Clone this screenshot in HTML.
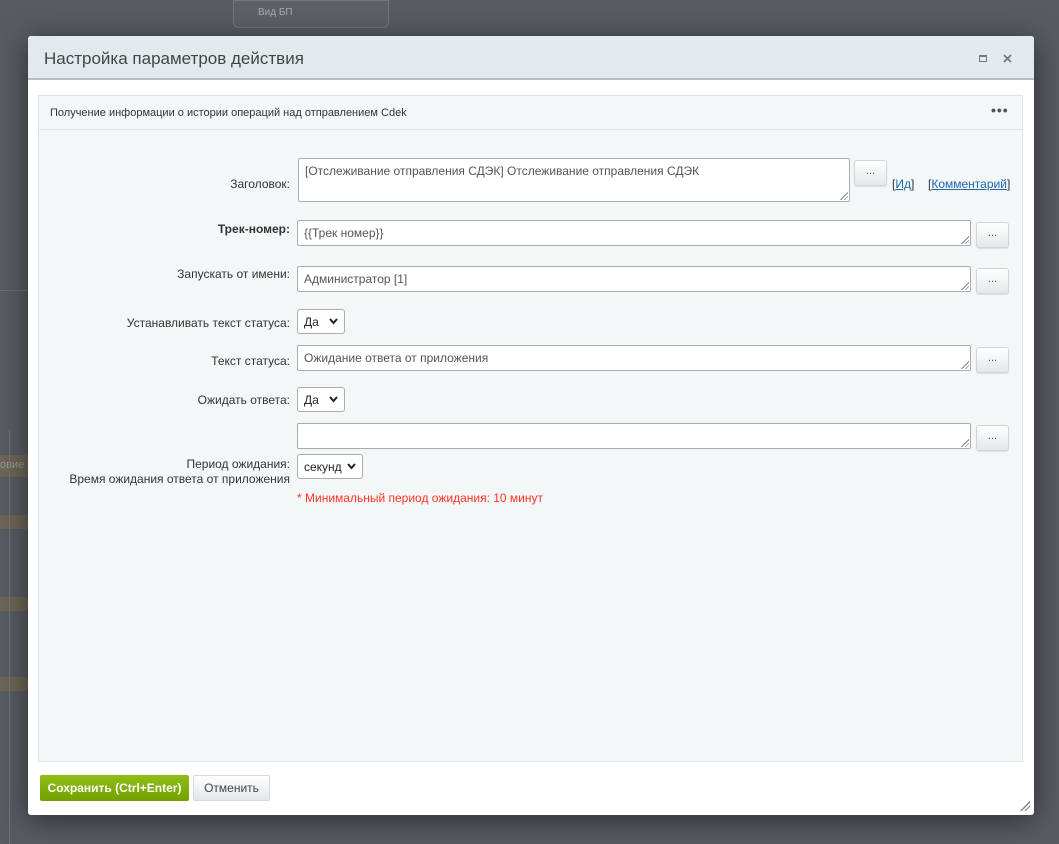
<!DOCTYPE html>
<html><head><meta charset="utf-8"><style>
*{box-sizing:border-box;margin:0;padding:0}
body{width:1059px;height:844px;overflow:hidden;background:#575c63;font-family:"Liberation Sans",sans-serif;font-size:12px;color:#333;position:relative}
.a{position:absolute}
.modal{left:28px;top:36px;width:1006px;height:779px;background:#fff;border-radius:3px;box-shadow:0 5px 30px rgba(0,0,0,.5)}
.hdr{left:0;top:0;width:1006px;height:44px;background:#e3eaed;border-bottom:2px solid #b7bcbf;border-radius:3px 3px 0 0}
.hdr span{position:absolute;left:16px;top:13px;font-size:17px;color:#444}
.panel{left:10px;top:59px;width:985px;height:667px;background:#f4f7f8;border:1px solid #dbe4e8}
.ph{left:0;top:0;width:983px;height:34px;border-bottom:1px solid #dbe4e8;background:#f4f7f8}
.lbl{text-align:right;font-size:12px;color:#333;width:300px}
.inp{background:#fff;border:1px solid #a8adb1;border-radius:2px;padding:5px 6px;font-size:12px;color:#555}
.btn{width:33px;height:26px;border:1px solid #cfd5d8;border-radius:3px;background:linear-gradient(#fff,#e3e8eb);text-align:center;font-size:11px;line-height:20px;color:#555;box-shadow:0 1px 1px rgba(0,0,0,.1)}
.sel{height:25px;border:1px solid #a8adb1;border-radius:3px;background:#fff;padding:5px 6px;font-size:12px;color:#222}
.sel svg{position:absolute;right:6px;top:8px}
.rs{position:absolute;right:1px;bottom:1px;width:8px;height:8px;background:linear-gradient(135deg,transparent 50%,#888 50%,#888 58%,transparent 58%,transparent 72%,#888 72%,#888 80%,transparent 80%)}
a{color:#2067b0}
</style></head><body>
<div class="a" style="left:233px;top:0;width:156px;height:28px;border:1px solid #777;border-radius:0 0 6px 6px;background:#5c6167;color:#aaa;font-size:10px;padding:6px 0 0 24px">Вид БП</div>
<div class="a" style="left:0;top:290px;width:28px;height:1px;background:#6a6f75"></div>
<div class="a" style="left:0;top:455px;width:28px;height:22px;background:#6e6656;color:#999;font-size:11px;padding-top:4px">овие</div>
<div class="a" style="left:0;top:515px;width:28px;height:14px;background:#6e6656"></div>
<div class="a" style="left:0;top:597px;width:28px;height:14px;background:#6e6656"></div>
<div class="a" style="left:0;top:677px;width:28px;height:14px;background:#6e6656"></div>
<div class="a" style="left:9px;top:430px;width:1px;height:414px;background:#6f747a"></div>
<div class="a modal">
 <div class="a hdr"><span>Настройка параметров действия</span>
  <div class="a" style="left:951px;top:19px;width:8px;height:7px;border:1px solid #6d7a8a;border-top-width:2px"></div>
  <svg class="a" style="left:975px;top:18px" width="9" height="9"><path d="M1 1L8 8M8 1L1 8" stroke="#6d7a8a" stroke-width="1.8"/></svg>
 </div>
 <div class="a panel">
  <div class="a ph"><span class="a" style="left:11px;top:11px;font-size:11px">Получение информации о истории операций над отправлением Cdek</span>
   <span class="a" style="left:952px;top:6px;font-size:14px;letter-spacing:1px;color:#555;font-weight:bold">•••</span></div>
 </div>
 <div class="a lbl" style="left:-38px;top:141px">Заголовок:</div>
 <div class="a inp" style="left:270px;top:122px;width:552px;height:44px">[Отслеживание отправления СДЭК] Отслеживание отправления СДЭК<div class="rs"></div></div>
 <div class="a btn" style="left:826px;top:124px">...</div>
 <div class="a" style="left:864px;top:141px">[<a href="#">Ид</a>]</div>
 <div class="a" style="left:900px;top:141px">[<a href="#">Комментарий</a>]</div>

 <div class="a lbl" style="left:-38px;top:186px;font-weight:bold">Трек-номер:</div>
 <div class="a inp" style="left:269px;top:184px;width:674px;height:26px">{{Трек номер}}<div class="rs"></div></div>
 <div class="a btn" style="left:948px;top:186px">...</div>

 <div class="a lbl" style="left:-38px;top:231px">Запускать от имени:</div>
 <div class="a inp" style="left:269px;top:230px;width:674px;height:26px">Администратор [1]<div class="rs"></div></div>
 <div class="a btn" style="left:948px;top:232px">...</div>

 <div class="a lbl" style="left:-38px;top:280px">Устанавливать текст статуса:</div>
 <div class="a sel" style="left:269px;top:273px;width:48px">Да<svg width="9" height="7"><path d="M1 1L4.5 5L8 1" stroke="#222" stroke-width="2" fill="none"/></svg></div>

 <div class="a lbl" style="left:-38px;top:318px">Текст статуса:</div>
 <div class="a inp" style="left:269px;top:309px;width:674px;height:26px">Ожидание ответа от приложения<div class="rs"></div></div>
 <div class="a btn" style="left:948px;top:311px">...</div>

 <div class="a lbl" style="left:-38px;top:357px">Ожидать ответа:</div>
 <div class="a sel" style="left:269px;top:351px;width:48px">Да<svg width="9" height="7"><path d="M1 1L4.5 5L8 1" stroke="#222" stroke-width="2" fill="none"/></svg></div>

 <div class="a inp" style="left:269px;top:387px;width:674px;height:26px"><div class="rs"></div></div>
 <div class="a btn" style="left:948px;top:389px">...</div>
 <div class="a lbl" style="left:-38px;top:421px;line-height:15px">Период ожидания:<br>Время ожидания ответа от приложения</div>
 <div class="a sel" style="left:269px;top:418px;width:66px">секунд<svg width="9" height="7"><path d="M1 1L4.5 5L8 1" stroke="#222" stroke-width="2" fill="none"/></svg></div>
 <div class="a" style="left:269px;top:455px;color:#f32;font-size:12px">* Минимальный период ожидания: 10 минут</div>

 <div class="a" style="left:12px;top:739px;width:149px;height:26px;border-radius:2px;background:linear-gradient(#8fbf17,#72a000);color:#fff;font-weight:bold;font-size:12px;text-align:center;line-height:26px">Сохранить (Ctrl+Enter)</div>
 <div class="a" style="left:165px;top:739px;width:77px;height:26px;border-radius:2px;border:1px solid #d5dadd;background:linear-gradient(#fff,#e2e7ea);color:#444;font-size:12px;text-align:center;line-height:24px">Отменить</div>
 <div class="rs" style="right:4px;bottom:4px;width:10px;height:10px"></div>
</div>
</body></html>
